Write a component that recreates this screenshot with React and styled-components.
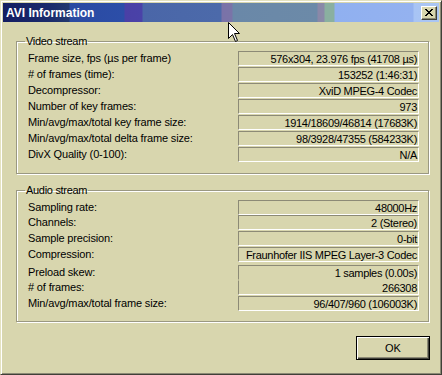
import React from "react";
import styled, { createGlobalStyle } from "styled-components";

const BG = "#d8d6ae";

const GlobalStyle = createGlobalStyle`
  body {
    margin: 0;
    background: ${BG};
    font-family: "Liberation Sans", Arial, sans-serif;
  }
`;

const Window = styled.div`
  position: relative;
  width: 442px;
  height: 375px;
  box-sizing: border-box;
  background: ${BG};
  border-top: 1px solid #e4e2c0;
  border-left: 1px solid #e4e2c0;
  border-right: 1px solid #404038;
  border-bottom: 1px solid #404038;
  box-shadow: inset 1px 1px 0 #ffffff, inset -1px -1px 0 #8c8a76;
  padding: 2px;
  font-size: 11px;
  color: #000;
`;

// the bands in the title gradient are from the captured screen, kept as hard stops
const TitleBar = styled.div`
  height: 19px;
  display: flex;
  align-items: center;
  justify-content: space-between;
  padding: 0 2px 0 3px;
  background: linear-gradient(
    to right,
    #141e62 0px,
    #1a2a6c 45px,
    #22386e 66px,
    #2a4aa2 67px,
    #2c4ea8 121px,
    #4a40a6 122px,
    #4a42a8 139px,
    #4a66a8 140px,
    #4c6aaa 218px,
    #7a72a8 219px,
    #7a74a8 229px,
    #6a88a8 230px,
    #6c8aa8 314px,
    #8a88a8 315px,
    #8a8aa8 321px,
    #8ab0a0 322px,
    #8ab0a0 331px,
    #90b0f0 332px,
    #94b2f0 410px,
    #a8c4f4 411px,
    #aac6f4 100%
  );
`;

const Title = styled.span`
  color: #fff;
  font-weight: bold;
  font-size: 12px;
`;

const CloseButton = styled.div`
  width: 16px;
  height: 14px;
  box-sizing: border-box;
  background: ${BG};
  border-top: 1px solid #fff;
  border-left: 1px solid #fff;
  border-right: 1px solid #404038;
  border-bottom: 1px solid #404038;
  box-shadow: inset -1px -1px 0 #8c8a76;
  display: flex;
  align-items: center;
  justify-content: center;
`;

const Body = styled.div`
  padding: 13px 10px 0 13px;
  display: flex;
  flex-direction: column;
`;

const Group = styled.fieldset`
  margin: ${(p) => p.$mt || 0}px 0 0 0;
  padding: 3px 9px ${(p) => p.$pb}px 11px;
  border: 1px solid #9a9882;
  box-shadow: inset 1px 1px 0 #fff, 1px 1px 0 #fff;
  min-width: 0;
`;

const Legend = styled.legend`
  padding: 0 1px;
  margin-left: -3px;
  font-size: 11px;
  letter-spacing: -0.3px;
  line-height: 13px;
`;

const Rows = styled.div`
  display: grid;
  grid-template-columns: 210px 181px;
`;

const Label = styled.div`
  height: ${(p) => p.$h || 15}px;
  margin-top: ${(p) => p.$mt || 0}px;
  line-height: 15px;
  white-space: nowrap;
  font-size: 11px;
  letter-spacing: -0.15px;
`;

const Value = styled.div`
  height: ${(p) => p.$h || 15}px;
  margin-top: ${(p) => p.$mt || 0}px;
  box-sizing: border-box;
  border-top: 1px solid ${(p) => (p.$joinTop ? "transparent" : "#8c8a76")};
  border-left: 1px solid #8c8a76;
  border-right: 1px solid #fff;
  border-bottom: 1px solid ${(p) => (p.$joinBottom ? "transparent" : "#fff")};
  text-align: right;
  padding-right: 1px;
  line-height: 14px;
  white-space: nowrap;
  overflow: hidden;
  font-size: 11px;
  letter-spacing: -0.3px;
`;

const Footer = styled.div`
  display: flex;
  justify-content: flex-end;
  margin-top: 14px;
`;

const OkButton = styled.button`
  width: 74px;
  height: 24px;
  margin-right: -1px;
  background: ${BG};
  font-family: "Liberation Sans", Arial, sans-serif;
  font-size: 11px;
  color: #000;
  border: 1px solid #000;
  box-shadow: inset 1px 1px 0 #fff, inset -1px -1px 0 #404038,
    inset -2px -2px 0 #8c8a76;
  padding: 0;
`;

const Cursor = styled.svg`
  position: absolute;
  left: 227px;
  top: 21px;
`;

const video = [
  ["Frame size, fps (\u00b5s per frame)", "576x304, 23.976 fps (41708 \u00b5s)"],
  ["# of frames (time):", "153252 (1:46:31)"],
  ["Decompressor:", "XviD MPEG-4 Codec"],
  ["Number of key frames:", "973"],
  ["Min/avg/max/total key frame size:", "1914/18609/46814 (17683K)"],
  ["Min/avg/max/total delta frame size:", "98/3928/47355 (584233K)"],
  ["DivX Quality (0-100):", "N/A"],
];

const audio = [
  { label: "Sampling rate:", value: "48000Hz", mt: 0 },
  { label: "Channels:", value: "2 (Stereo)", mt: 0 },
  { label: "Sample precision:", value: "0-bit", mt: 1 },
  { label: "Compression:", value: "Fraunhofer IIS MPEG Layer-3 Codec", mt: 1 },
  { label: "Preload skew:", value: "1 samples (0.00s)", mt: 3, joinBottom: true },
  { label: "# of frames:", value: "266308", mt: 0, joinTop: true },
  { label: "Min/avg/max/total frame size:", value: "96/407/960 (106003K)", mt: 1 },
];

export default function App() {
  return (
    <>
      <GlobalStyle />
      <Window>
        <TitleBar>
          <Title>AVI Information</Title>
          <CloseButton>
            <svg width="8" height="7" viewBox="0 0 8 7">
              <path d="M0 0 L7 7 M1 0 L8 7 M7 0 L0 7 M8 0 L1 7" stroke="#000" strokeWidth="1" />
            </svg>
          </CloseButton>
        </TitleBar>
        <Body>
          <Group $pb={11}>
            <Legend>Video stream</Legend>
            <Rows>
              {video.map(([label, value], i) => (
                <React.Fragment key={label}>
                  <Label $mt={i ? 1 : 0}>{label}</Label>
                  <Value $mt={i ? 1 : 0}>{value}</Value>
                </React.Fragment>
              ))}
            </Rows>
          </Group>
          <Group $mt={10} $pb={10}>
            <Legend>Audio stream</Legend>
            <Rows>
              {audio.map((r) => (
                <React.Fragment key={r.label}>
                  <Label $mt={r.mt}>{r.label}</Label>
                  <Value $mt={r.mt} $joinTop={r.joinTop} $joinBottom={r.joinBottom}>
                    {r.value}
                  </Value>
                </React.Fragment>
              ))}
            </Rows>
          </Group>
          <Footer>
            <OkButton>OK</OkButton>
          </Footer>
        </Body>
        <Cursor width="13" height="21" viewBox="0 0 13 21">
          <path
            d="M0.5 0.5 L0.5 16.5 L4.5 12.5 L7.5 19.5 L9.5 18.5 L6.5 11.5 L11.5 11.5 Z"
            fill="#fff"
            stroke="#000"
            strokeWidth="1"
          />
        </Cursor>
      </Window>
    </>
  );
}
